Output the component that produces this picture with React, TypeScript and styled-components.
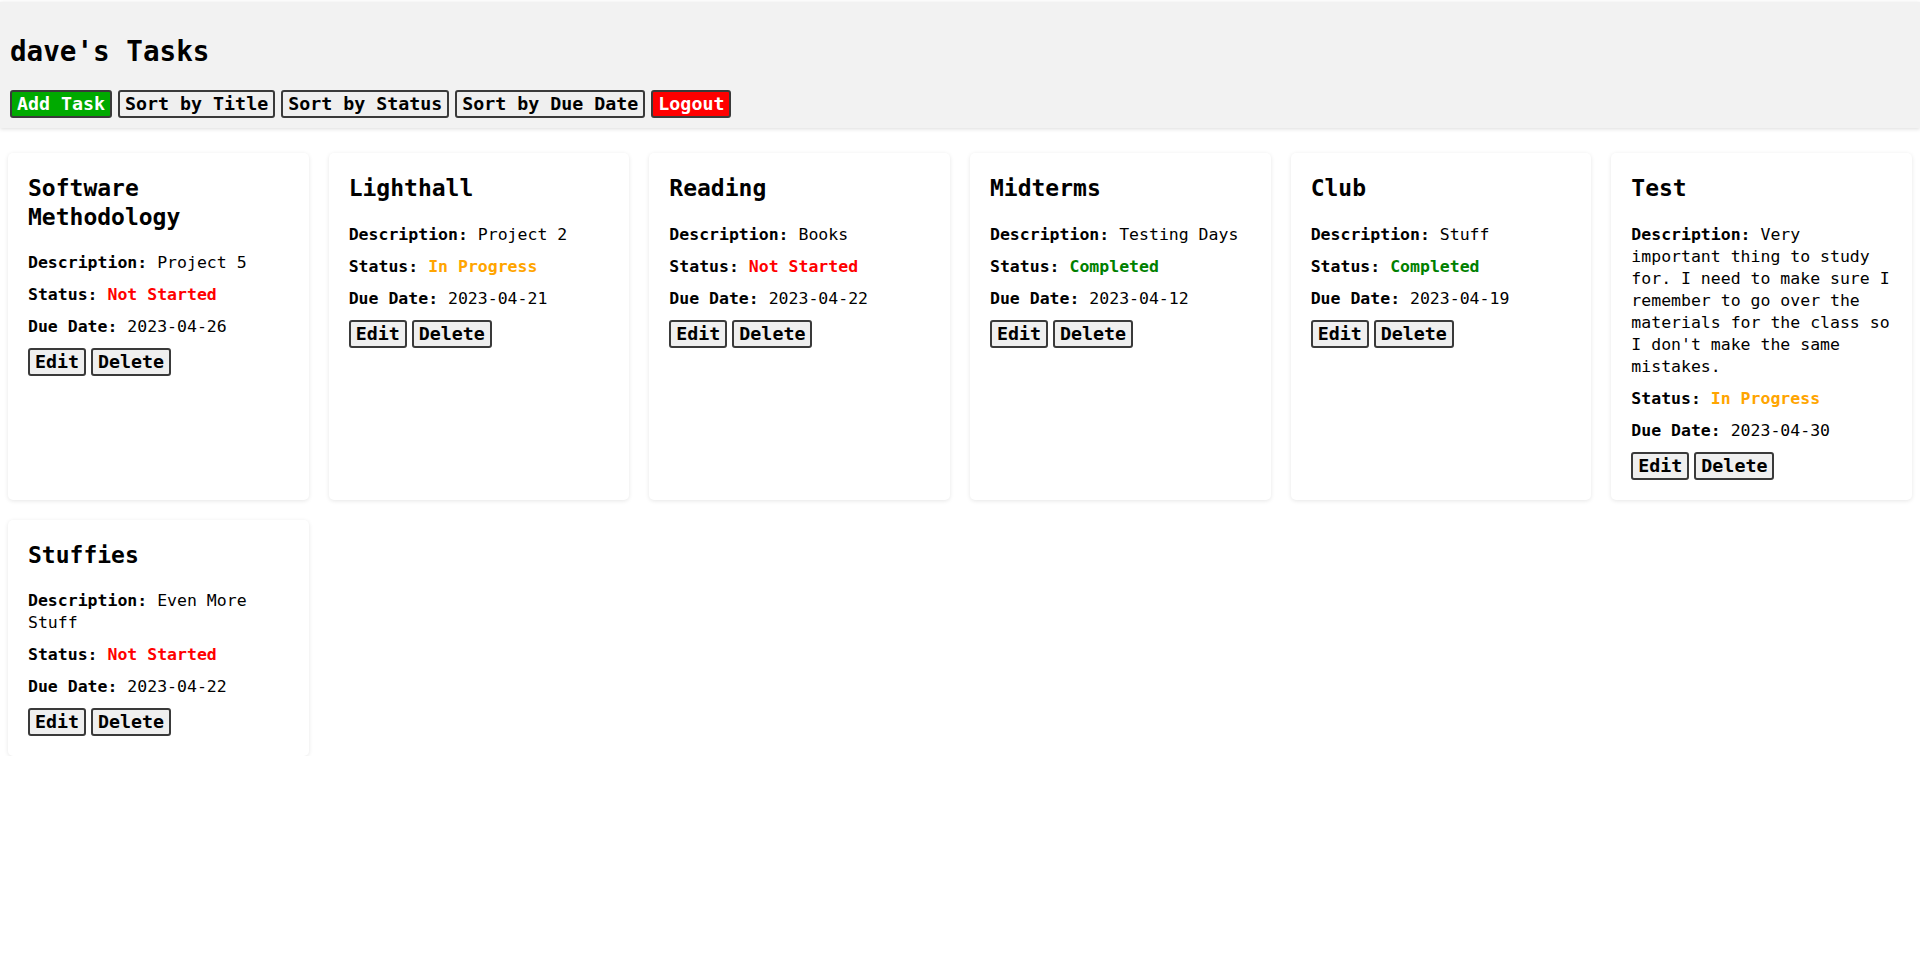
import React from "react";
import styled, { createGlobalStyle } from "styled-components";

const GlobalStyle = createGlobalStyle`
  html, body {
    margin: 0;
    padding: 0;
    background: #ffffff;
    color: #000000;
    font-family: "DejaVu Sans Mono", "Liberation Mono", monospace;
  }
`;

const Page = styled.div`
  padding-top: 2px;
`;

const Header = styled.header`
  background: #f2f2f2;
  padding: 10px;
  box-shadow: 0 1px 4px rgba(0, 0, 0, 0.14);
`;

const Title = styled.h1`
  margin: 23px 0 21px;
  font-size: 27.6px;
  line-height: 34px;
  font-weight: bold;
`;

const Toolbar = styled.div`
  display: flex;
  gap: 6px;
`;

type Tone = "default" | "green" | "red";

const Button = styled.button<{ $tone?: Tone }>`
  font-family: "DejaVu Sans Mono", "Liberation Mono", monospace;
  font-size: 18.3px;
  font-weight: bold;
  line-height: 22px;
  padding: 1px 5px;
  border: 2px solid #3a3a3a;
  border-radius: 3px;
  cursor: pointer;
  background: ${(p) =>
    p.$tone === "green" ? "#00aa00" : p.$tone === "red" ? "#ff0000" : "#efefef"};
  color: ${(p) => (p.$tone === "green" || p.$tone === "red" ? "#ffffff" : "#000000")};
`;

const Grid = styled.main`
  display: grid;
  grid-template-columns: repeat(6, 1fr);
  gap: 20px;
  padding: 0 8px;
  margin-top: 25px;
`;

const Card = styled.div`
  background: #ffffff;
  border-radius: 5px;
  padding: 20px;
  box-shadow: 0 1px 4px rgba(0, 0, 0, 0.1);
`;

const CardTitle = styled.h2`
  margin: 0 0 21px;
  padding-top: 1px;
  font-size: 23px;
  line-height: 28.5px;
  font-weight: bold;
`;

const Field = styled.p`
  margin: 0 0 10px;
  font-size: 16.5px;
  line-height: 22px;
`;

const Label = styled.strong`
  font-weight: bold;
`;

type Status = "Not Started" | "In Progress" | "Completed";

const statusColor: Record<Status, string> = {
  "Not Started": "#ff0000",
  "In Progress": "#ffa500",
  Completed: "#008000",
};

const StatusText = styled.span<{ $status: Status }>`
  font-weight: bold;
  color: ${(p) => statusColor[p.$status]};
`;

const CardActions = styled.div`
  display: flex;
  gap: 5px;
`;

interface Task {
  title: string;
  description: string;
  status: Status;
  due: string;
}

const tasks: Task[] = [
  { title: "Software Methodology", description: "Project 5", status: "Not Started", due: "2023-04-26" },
  { title: "Lighthall", description: "Project 2", status: "In Progress", due: "2023-04-21" },
  { title: "Reading", description: "Books", status: "Not Started", due: "2023-04-22" },
  { title: "Midterms", description: "Testing Days", status: "Completed", due: "2023-04-12" },
  { title: "Club", description: "Stuff", status: "Completed", due: "2023-04-19" },
  {
    title: "Test",
    description:
      "Very important thing to study for. I need to make sure I remember to go over the materials for the class so I don't make the same mistakes.",
    status: "In Progress",
    due: "2023-04-30",
  },
  { title: "Stuffies", description: "Even More Stuff", status: "Not Started", due: "2023-04-22" },
];

export default function App() {
  return (
    <Page>
      <GlobalStyle />
      <Header>
        <Title>dave's Tasks</Title>
        <Toolbar>
          <Button $tone="green">Add Task</Button>
          <Button>Sort by Title</Button>
          <Button>Sort by Status</Button>
          <Button>Sort by Due Date</Button>
          <Button $tone="red">Logout</Button>
        </Toolbar>
      </Header>
      <Grid>
        {tasks.map((t) => (
          <Card key={t.title}>
            <CardTitle>{t.title}</CardTitle>
            <Field>
              <Label>Description:</Label> {t.description}
            </Field>
            <Field>
              <Label>Status:</Label> <StatusText $status={t.status}>{t.status}</StatusText>
            </Field>
            <Field>
              <Label>Due Date:</Label> {t.due}
            </Field>
            <CardActions>
              <Button>Edit</Button>
              <Button>Delete</Button>
            </CardActions>
          </Card>
        ))}
      </Grid>
    </Page>
  );
}
